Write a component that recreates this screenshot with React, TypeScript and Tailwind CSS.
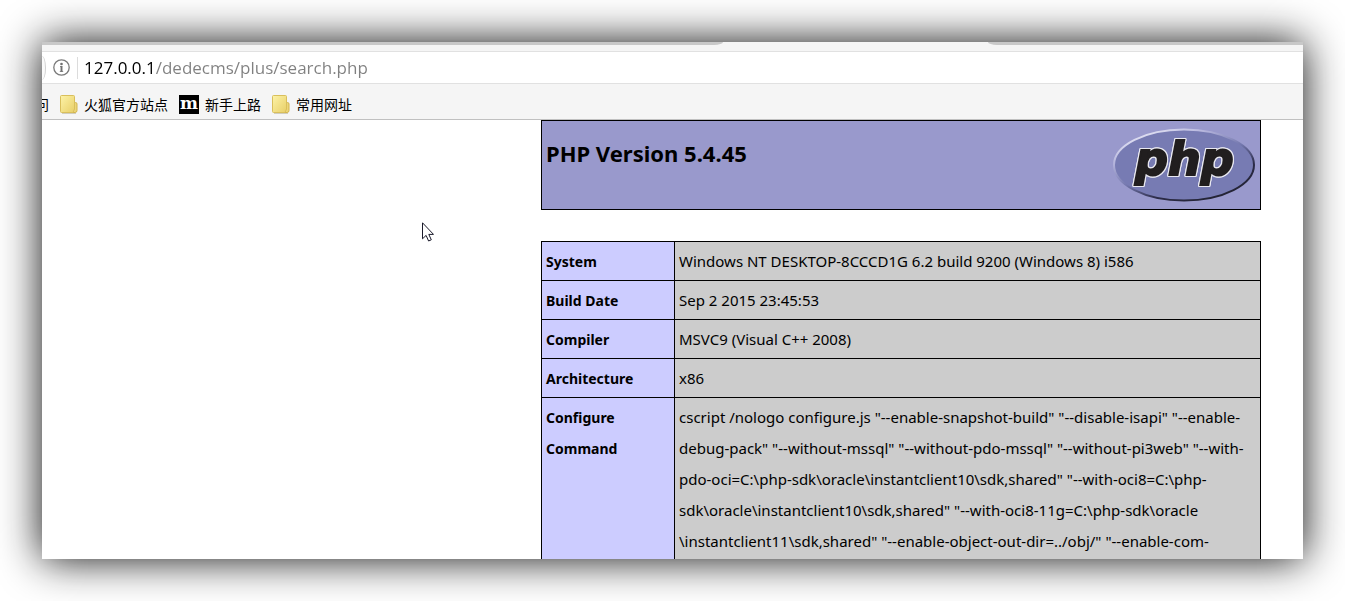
import React from "react";

const rows: { label: string; lines: string[] }[] = [
  { label: "System", lines: ["Windows NT DESKTOP-8CCCD1G 6.2 build 9200 (Windows 8) i586"] },
  { label: "Build Date", lines: ["Sep 2 2015 23:45:53"] },
  { label: "Compiler", lines: ["MSVC9 (Visual C++ 2008)"] },
  { label: "Architecture", lines: ["x86"] },
  {
    label: "Configure Command",
    lines: [
      'cscript /nologo configure.js "--enable-snapshot-build" "--disable-isapi" "--enable-',
      'debug-pack" "--without-mssql" "--without-pdo-mssql" "--without-pi3web" "--with-',
      'pdo-oci=C:\\php-sdk\\oracle\\instantclient10\\sdk,shared" "--with-oci8=C:\\php-',
      'sdk\\oracle\\instantclient10\\sdk,shared" "--with-oci8-11g=C:\\php-sdk\\oracle',
      '\\instantclient11\\sdk,shared" "--enable-object-out-dir=../obj/" "--enable-com-',
    ],
  },
];

function FolderIcon() {
  return (
    <svg className="h-5 w-[18px] shrink-0" viewBox="0 0 18 20" aria-hidden="true">
      <defs>
        <linearGradient id="folder" x1="0" y1="0" x2="1" y2="1">
          <stop offset="0" stopColor="#fdf3a8" />
          <stop offset="1" stopColor="#e8cf68" />
        </linearGradient>
      </defs>
      <path d="M2 18.500h14" stroke="#b9b39a" strokeWidth="1" opacity=".6" />
      <path d="M13 7.500h2.500a1.500 1.500 0 0 1 1.500 1.500v6.500a2 2 0 0 1-2 2H11z" fill="#ecd679" stroke="#d3b54e" />
      <path d="M1.500 .5h12a1 1 0 0 1 1 1v12.500l-1.500 3.500H1.500a1 1 0 0 1-1-1V1.500a1 1 0 0 1 1-1z" fill="url(#folder)" stroke="#d9bf5c" />
    </svg>
  );
}

function MozillaIcon() {
  return (
    <span className="flex h-[19px] w-5 shrink-0 items-center justify-center bg-black pb-[2px] font-['DejaVu_Serif',serif] text-[17px] leading-none font-bold text-white">
      m
    </span>
  );
}

function InfoIcon() {
  return (
    <svg className="size-[18px]" viewBox="0 0 18 18" fill="none" aria-hidden="true">
      <circle cx="9.500" cy="8.500" r="7.700" stroke="#7a7a7a" strokeWidth="1.300" />
      <circle cx="9.500" cy="5" r="1.300" fill="#707070" />
      <path d="M8 7.600h2.300M7.800 12.400h3.400" stroke="#858585" strokeWidth="1" />
      <path d="M9.500 7.200v5.600" stroke="#707070" strokeWidth="1.900" />
    </svg>
  );
}

function PhpLogo() {
  return (
    <svg className="h-[76px] w-[142px]" viewBox="0 0 142 76" role="img" aria-label="PHP logo">
      <defs>
        <linearGradient id="rim" x1="0.15" y1="0" x2="0.85" y2="1">
          <stop offset="0" stopColor="#f0f0fa" />
          <stop offset="0.25" stopColor="#b4b4dc" />
          <stop offset="0.5" stopColor="#7377ad" />
          <stop offset="0.72" stopColor="#2c2c48" />
          <stop offset="1" stopColor="#20202c" />
        </linearGradient>
      </defs>
      <ellipse cx="71" cy="38" rx="70" ry="35.500" fill="#777bb3" stroke="url(#rim)" strokeWidth="2" />
      <text
        x="22"
        y="48"
        fill="#211e1f"
        stroke="#211e1f"
        strokeWidth="2"
        className="font-['DejaVu_Sans',sans-serif] text-[46px] font-bold italic [filter:drop-shadow(1px_0_0_#e8e8f0)_drop-shadow(-1px_0_0_#e8e8f0)_drop-shadow(0_1px_0_#e8e8f0)_drop-shadow(0_-1px_0_#e8e8f0)]"
      >
        php
      </text>
    </svg>
  );
}

function Cursor() {
  return (
    <svg className="absolute top-[102px] left-[380px] h-5 w-3" viewBox="0 0 12 20" aria-hidden="true">
      <path d="M.5.8v16l3.600-3.400 2.500 5.600 2.700-1.200-2.500-5.400h4.700z" fill="#fff" stroke="#1a1a2a" />
    </svg>
  );
}

function Bookmark({ icon, children }: { icon?: React.ReactNode; children: React.ReactNode }) {
  return (
    <a href="#" className="flex items-center gap-[6px] whitespace-nowrap">
      {icon}
      {children}
    </a>
  );
}

export default function App() {
  return (
    <div className="h-screen bg-white p-[42px] font-['Open_Sans','Noto_Sans_CJK_SC',sans-serif] text-black">
      <div className="flex h-full flex-col overflow-hidden bg-white shadow-[0_0_40px_rgba(0,0,0,0.95)]">
        <div className="flex h-[9px] shrink-0 items-start bg-[#f5f5f5]">
          <div className="h-[3px] w-[54%] rounded-br-[9px_3px] bg-[#c8c8c8]" />
          <div className="w-[21%]" />
          <div className="h-[3px] flex-1 rounded-bl-[9px_3px] bg-[#c8c8c8]" />
        </div>

        <div className="flex h-[33px] shrink-0 items-center border-y border-[#e1e1e1] bg-white">
          <div className="h-6 w-1 rounded-r-[4px_12px] border-r border-[#d0d0d0] bg-[#fafafa]" />
          <button type="button" aria-label="Site information" className="ml-[6px]">
            <InfoIcon />
          </button>
          <div className="ml-[7px] h-[22px] w-px bg-[#dcdcdc]" />
          <input
            type="text"
            aria-label="Address"
            defaultValue="127.0.0.1/dedecms/plus/search.php"
            className="ml-[6px] h-full min-w-0 flex-1 bg-linear-to-r from-black from-[70px] to-[#808080] to-[70px] bg-clip-text text-[17px] text-transparent caret-black outline-none"
          />
        </div>

        <nav className="flex h-9 shrink-0 items-center gap-[11px] border-b border-[#c0c0c0] bg-[#f5f5f5] pt-[6px] text-[14px]">
          <div className="flex w-[7px] justify-end overflow-hidden">
            <Bookmark>问</Bookmark>
          </div>
          <Bookmark icon={<FolderIcon />}>火狐官方站点</Bookmark>
          <Bookmark icon={<MozillaIcon />}>新手上路</Bookmark>
          <Bookmark icon={<FolderIcon />}>常用网址</Bookmark>
        </nav>

        <main className="relative min-h-0 flex-1 font-['Noto_Sans',sans-serif]">
          <div className="mr-[42px] ml-auto w-[720px]">
            <header className="mb-[31px] flex h-[90px] items-start justify-between border border-black bg-[#9999cc] pt-[6px] pr-[5px] pl-1">
              <h1 className="pt-[10px] text-[22px] leading-8 font-bold">PHP Version 5.4.45</h1>
              <PhpLogo />
            </header>
            <table className="w-full table-fixed border-collapse leading-[31px]">
              <tbody>
                {rows.map((row) => (
                  <tr key={row.label}>
                    <th
                      scope="row"
                      className="w-[133px] border border-black bg-[#ccccff] px-1 pt-1 pb-[3px] text-left align-top text-[14px] font-bold"
                    >
                      {row.label}
                    </th>
                    <td className="border border-black bg-[#cccccc] px-1 pt-1 pb-[3px] align-top text-[15px] whitespace-nowrap">
                      {row.lines.map((line) => (
                        <div key={line}>{line}</div>
                      ))}
                    </td>
                  </tr>
                ))}
              </tbody>
            </table>
          </div>
          <Cursor />
        </main>
      </div>
    </div>
  );
}
